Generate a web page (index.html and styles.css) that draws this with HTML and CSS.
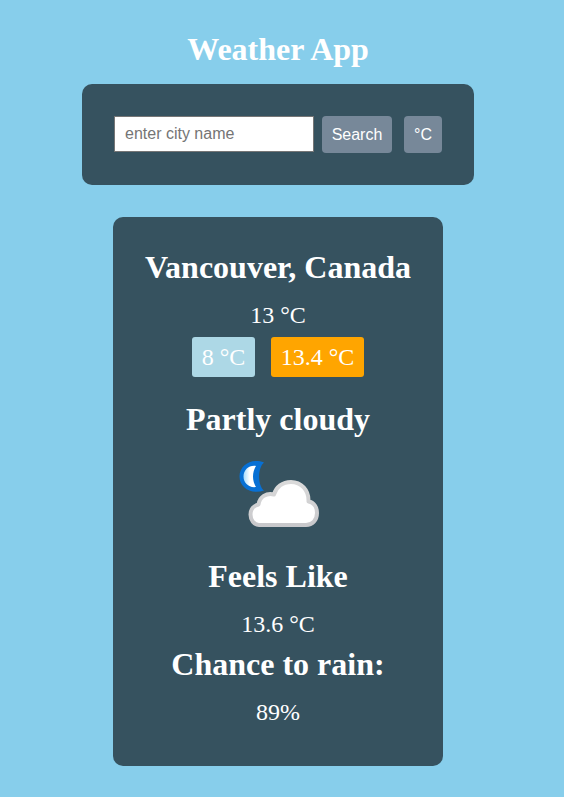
FILE: index.html
```html
<!DOCTYPE html>
<html lang="en">
<head>
<meta charset="utf-8">
<title>Weather App</title>
<link rel="stylesheet" href="styles.css">
</head>
<body>
<main class="app">
  <h1 class="title">Weather App</h1>
  <form class="search">
    <input class="search-input" type="text" placeholder="enter city name">
    <button class="btn btn-search" type="button">Search</button>
    <button class="btn btn-unit" type="button">°C</button>
  </form>
  <section class="card">
    <h1 class="location">Vancouver, Canada</h1>
    <p class="value">13 °C</p>
    <div class="range">
      <p class="low">8 °C</p>
      <p class="high">13.4 °C</p>
    </div>
    <h1 class="condition">Partly cloudy</h1>
    <svg class="icon" viewBox="-2 0 110 90" width="110" height="90" aria-hidden="true">
      <defs>
        <linearGradient id="rim" x1="0" y1="0" x2="0" y2="1"><stop offset="0" stop-color="#dadada"/><stop offset="1" stop-color="#c8c8cb"/></linearGradient>
        <linearGradient id="moon" x1="0" y1="0" x2="1" y2="0"><stop offset="0" stop-color="#a5dcff"/><stop offset="0.500" stop-color="#fff"/></linearGradient>
      </defs>
      <path d="M39 12.500C26 7.500 14.500 15.500 14.500 26.500C14.500 37.500 26 45 39 40.500C32.500 35.500 32.500 18 39 12.500Z" fill="#0870d4"/>
      <path d="M31 16C24 15 18.500 20 18.500 26.500C18.500 33 24 38 31 37C27 31 27 22 31 16Z" fill="url(#moon)"/>
      <path d="M34 75C29 75 25.500 70 25.500 64.500C25.500 59 29 55.500 33.500 54.500C34.500 47 41.500 42.500 49 44.500C51 37 57.500 32 66 32C76 32 84 40 83.500 51.500C89 52.500 92 57 92 63C92 70 87.500 75 81 75Z" fill="#fff" stroke="url(#rim)" stroke-width="4" stroke-linejoin="round"/>
    </svg>
    <h1 class="feels">Feels Like</h1>
    <p class="value">13.6 °C</p>
    <h1 class="rain">Chance to rain:</h1>
    <p class="value">89%</p>
  </section>
</main>
</body>
</html>
```
FILE: styles.css
```css
* { box-sizing: border-box; margin: 0; padding: 0; }
body { background: skyblue; color: #fff; font-family: "Liberation Serif", "Times New Roman", serif; }
.app { width: 556px; padding-top: 32px; display: flex; flex-direction: column; align-items: center; }
h1 { padding-bottom: 2px; font-size: 32px; line-height: 34px; text-align: center; white-space: nowrap; }
.search { width: 392px; height: 101px; margin-top: 16px; padding: 32px; display: flex; align-items: flex-start; background: #36525f; border-radius: 10px; }
.search-input { width: 200px; height: 36px; padding: 0 10px 1px; border: 1px solid #767676; font: 16px "Liberation Sans", Arial, sans-serif; }
.btn { height: 37px; border: 0; border-radius: 4px; background: lightslategray; color: #fff; font: 16px "Liberation Sans", Arial, sans-serif; }
.btn-search { width: 70px; margin-left: 8px; }
.btn-unit { width: 38px; margin-left: 12px; }
.card { width: 330px; height: 549px; margin-top: 32px; padding-top: 33px; display: flex; flex-direction: column; align-items: center; background: #36525f; border-radius: 10px; }
.value { margin-top: 16px; font-size: 24px; line-height: 27px; }
.range { display: flex; gap: 16px; margin-top: 8px; font-size: 24px; line-height: 40px; }
.low, .high { height: 40px; border-radius: 3px; text-align: center; }
.low { width: 63px; background: lightblue; }
.high { width: 93px; background: orange; }
.condition { margin-top: 25px; }
.icon { margin-top: 12px; }
.feels { margin-top: 19px; }
.rain { margin-top: 9px; }
```
